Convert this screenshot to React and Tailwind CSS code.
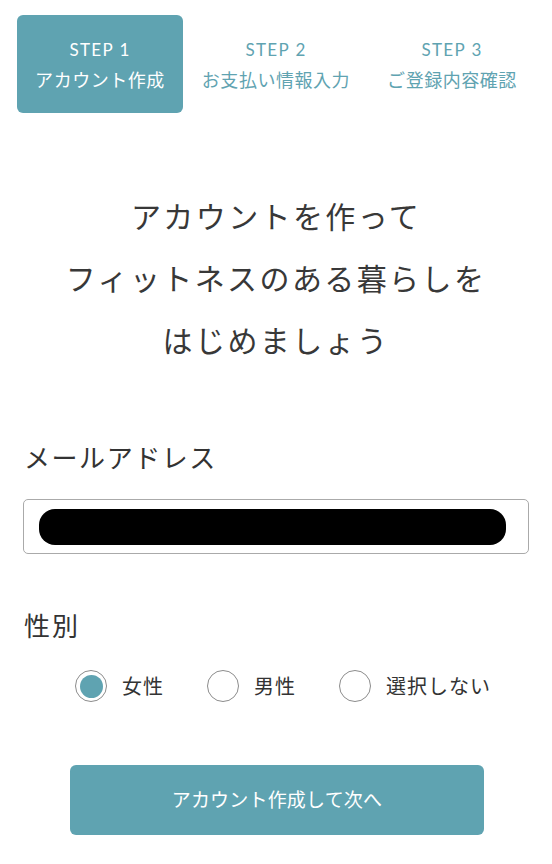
import React from "react";

const JP = { fontFamily: '"Lato", "Noto Sans CJK JP", sans-serif' };

function Step({ n, label, active }) {
  return (
    <div
      className={
        "flex h-[98px] flex-col items-center justify-center rounded-[6px] pt-[3px] " +
        (active ? "bg-[#5fa3b1] text-white" : "bg-white text-[#5fa3b1]")
      }
    >
      <div className="text-[17px] font-normal leading-[20px] tracking-[0.08em]">STEP {n}</div>
      <div className="mt-[9px] text-[18px] leading-[22px] tracking-[0.03em]">{label}</div>
    </div>
  );
}

function Radio({ label, checked }) {
  return (
    <div className="flex items-center">
      <div className="flex h-[32px] w-[32px] items-center justify-center rounded-full border border-[#8c8c8c] bg-white">
        {checked && <div className="h-[23px] w-[23px] rounded-full bg-[#5fa3b1]" />}
      </div>
      <span className="ml-[15px] text-[20px] leading-[28px] tracking-[0.05em] text-[#333]">{label}</span>
    </div>
  );
}

export default function App() {
  return (
    <div className="min-h-[864px] w-[552px] bg-white" style={JP}>
      <div className="grid grid-cols-3 gap-[10px] px-[17px] pt-[15px]">
        <Step n={1} label="アカウント作成" active />
        <Step n={2} label="お支払い情報入力" />
        <Step n={3} label="ご登録内容確認" />
      </div>

      <h1 className="mt-[72px] text-center text-[30px] font-normal leading-[62px] tracking-[0.08em] text-[#383838]">
        アカウントを作って
        <br />
        フィットネスのある暮らしを
        <br />
        はじめましょう
      </h1>

      <div className="px-[23px]">
        <div className="mt-[69px] pl-[1px] text-[26px] leading-[36px] tracking-[0.06em] text-[#333]">
          メールアドレス
        </div>
        <div className="mt-[23px] h-[55px] rounded-[5px] border border-[#aaaaaa] pl-[15px] pr-[22px] pt-[9px]">
          <div className="h-[36px] rounded-[16px] bg-black" />
        </div>

        <div className="mt-[54px] pl-[1px] text-[26px] leading-[36px] tracking-[0.08em] text-[#333]">
          性別
        </div>
        <div className="mt-[26px] ml-[52px] flex items-center gap-[43px]">
          <Radio label="女性" checked />
          <Radio label="男性" />
          <Radio label="選択しない" />
        </div>
      </div>

      <div className="mt-[63px] flex justify-center">
        <button className="ml-[2px] h-[70px] w-[414px] rounded-[6px] bg-[#5fa3b1] text-[19px] tracking-[0.01em] text-white">
          アカウント作成して次へ
        </button>
      </div>
    </div>
  );
}
